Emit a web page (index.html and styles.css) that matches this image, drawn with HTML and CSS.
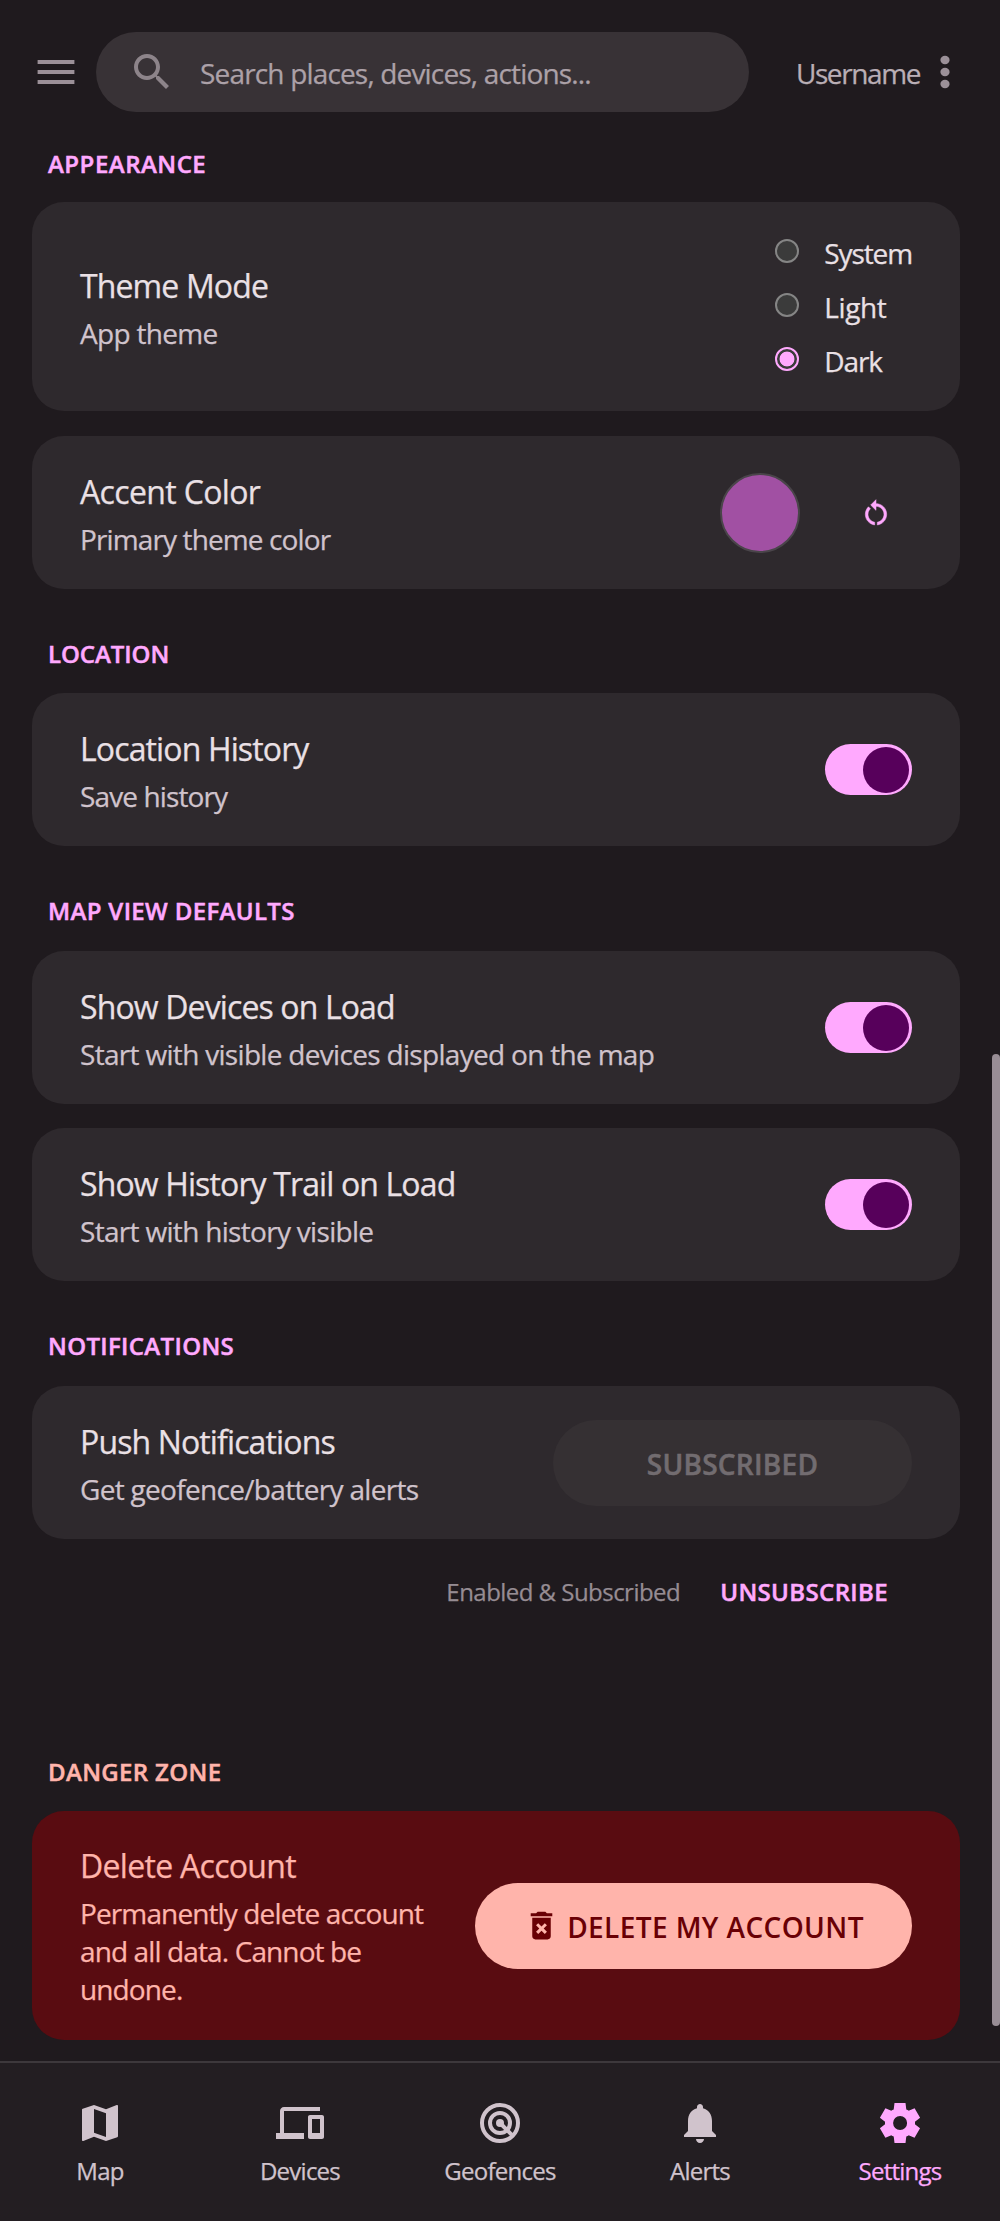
FILE: index.html
```html
<!DOCTYPE html>
<html lang="en">
<head>
<meta charset="utf-8">
<title>Settings</title>
<link rel="stylesheet" href="styles.css">
</head>
<body>
<div class="app">
  <header class="topbar">
    <button class="icon-btn" aria-label="Menu">
      <svg class="icon" viewBox="0 0 24 24"><path d="M2.8 18h18.4v-2H2.8v2zm0-5h18.4v-2H2.8v2zm0-7v2h18.4V6H2.8z"/></svg>
    </button>
    <div class="search">
      <svg class="icon" viewBox="0 0 24 24"><path d="M15.5 14h-.79l-.28-.27C15.41 12.59 16 11.11 16 9.5 16 5.91 13.09 3 9.5 3S3 5.91 3 9.5 5.91 16 9.5 16c1.61 0 3.09-.59 4.23-1.57l.27.28v.79l5 4.99L20.49 19l-4.99-5zm-6 0C7.01 14 5 11.99 5 9.5S7.01 5 9.5 5 14 7.01 14 9.5 11.99 14 9.5 14z"/></svg>
      <span class="search-hint">Search places, devices, actions...</span>
    </div>
    <span class="username">Username</span>
    <button class="icon-btn more" aria-label="More">
      <svg class="icon" viewBox="0 0 24 24"><ellipse cx="12" cy="6" rx="2.3" ry="2.1"/><ellipse cx="12" cy="12" rx="2.3" ry="2.1"/><ellipse cx="12" cy="18" rx="2.3" ry="2.1"/></svg>
    </button>
  </header>

  <main class="content">
    <section class="group">
      <h2 class="label">APPEARANCE</h2>
      <div class="card">
        <div class="text">
          <div class="title">Theme Mode</div>
          <div class="sub short">App theme</div>
        </div>
        <div class="radios">
          <label class="radio"><span class="ring"></span>System</label>
          <label class="radio light"><span class="ring"></span>Light</label>
          <label class="radio"><span class="ring on"></span>Dark</label>
        </div>
      </div>
      <div class="card accent">
        <div class="text">
          <div class="title color">Accent Color</div>
          <div class="sub">Primary theme color</div>
        </div>
        <span class="swatch"></span>
        <button class="reset" aria-label="Reset">
          <svg viewBox="0 0 24 24"><path d="M12 5V2L8 6l4 4V7c3.31 0 6 2.69 6 6 0 2.97-2.17 5.43-5 5.91v2.02c3.95-.49 7-3.85 7-7.93 0-4.42-3.58-8-8-8zM6 13c0-1.65.67-3.15 1.76-4.24L6.34 7.34C4.9 8.79 4 10.79 4 13c0 4.08 3.05 7.44 7 7.93v-2.02c-2.83-.48-5-2.94-5-5.91z"/></svg>
        </button>
      </div>
    </section>

    <section class="group location">
      <h2 class="label narrow">LOCATION</h2>
      <div class="card">
        <div class="text">
          <div class="title">Location History</div>
          <div class="sub">Save history</div>
        </div>
        <span class="toggle"><span class="knob"></span></span>
      </div>
    </section>

    <section class="group">
      <h2 class="label">MAP VIEW DEFAULTS</h2>
      <div class="card">
        <div class="text">
          <div class="title">Show Devices on Load</div>
          <div class="sub long">Start with visible devices displayed on the map</div>
        </div>
        <span class="toggle"><span class="knob"></span></span>
      </div>
      <div class="card">
        <div class="text">
          <div class="title">Show History Trail on Load</div>
          <div class="sub long">Start with history visible</div>
        </div>
        <span class="toggle"><span class="knob"></span></span>
      </div>
    </section>

    <section class="group">
      <h2 class="label">NOTIFICATIONS</h2>
      <div class="card">
        <div class="text">
          <div class="title">Push Notifications</div>
          <div class="sub long">Get geofence/battery alerts</div>
        </div>
        <button class="btn disabled" disabled>SUBSCRIBED</button>
      </div>
      <div class="status">
        <span class="status-text">Enabled &amp; Subscribed</span>
        <a class="link">UNSUBSCRIBE</a>
      </div>
    </section>

    <section class="group danger">
      <h2 class="label">DANGER ZONE</h2>
      <div class="card">
        <div class="text">
          <div class="title">Delete Account</div>
          <div class="sub">Permanently delete account and all data. Cannot be undone.</div>
        </div>
        <button class="btn delete">
          <svg viewBox="0 0 24 24"><path d="M6 19c0 1.1.9 2 2 2h8c1.1 0 2-.9 2-2V7H6v12zm2.46-7.12l1.41-1.41L12 12.59l2.12-2.12 1.41 1.41L13.41 14l2.12 2.12-1.41 1.41L12 15.41l-2.12 2.12-1.41-1.41L10.59 14l-2.13-2.12zM15.5 4l-1-1h-5l-1 1H5v2h14V4z"/></svg>
          <span>DELETE MY ACCOUNT</span>
        </button>
      </div>
    </section>
  </main>

  <nav class="tabs">
    <a class="tab">
      <svg class="icon" viewBox="0 0 24 24"><path d="M20.5 3l-.16.03L15 5.1 9 3 3.36 4.9c-.21.07-.36.25-.36.48V20.5c0 .28.22.5.5.5l.16-.03L9 18.9l6 2.1 5.64-1.9c.21-.07.36-.25.36-.48V3.5c0-.28-.22-.5-.5-.5zM15 19l-6-2.11V5l6 2.11V19z"/></svg>
      <span>Map</span>
    </a>
    <a class="tab">
      <svg class="icon" viewBox="0 0 24 24"><path d="M4 6h18V4H4c-1.1 0-2 .9-2 2v11H0v3h14v-3H4V6zm19 2h-6c-.55 0-1 .45-1 1v10c0 .55.45 1 1 1h6c.55 0 1-.45 1-1V9c0-.55-.45-1-1-1zm-1 9h-4v-7h4v7z"/></svg>
      <span>Devices</span>
    </a>
    <a class="tab">
      <svg class="icon target" viewBox="0 0 24 24"><circle cx="12" cy="12" r="9"/><circle cx="12" cy="12" r="5"/><circle class="dot" cx="12" cy="12" r="2"/><path d="M12 12l5.9 5.9"/></svg>
      <span>Geofences</span>
    </a>
    <a class="tab">
      <svg class="icon" viewBox="0 0 24 24"><path d="M12 22c1.1 0 2-.9 2-2h-4c0 1.1.89 2 2 2zm6-6v-5c0-3.07-1.64-5.64-4.5-6.32V4c0-.83-.67-1.5-1.5-1.5s-1.5.67-1.5 1.5v.68C7.63 5.36 6 7.92 6 11v5l-2 2v1h16v-1l-2-2z"/></svg>
      <span>Alerts</span>
    </a>
    <a class="tab active">
      <svg class="icon" viewBox="0 -960 960 960"><path d="m370-80-16-128q-13-5-24.5-12T307-235l-119 50L78-375l103-78q-1-7-1-13.5v-27q0-6.5 1-13.5L78-585l110-190 119 50q11-8 23-15t24-12l16-128h220l16 128q13 5 24.5 12t22.5 15l119-50 110 190-103 78q1 7 1 13.5v27q0 6.5-2 13.5l103 78-110 190-118-50q-11 8-23 15t-24 12L590-80H370Zm112-260q58 0 99-41t41-99q0-58-41-99t-99-41q-59 0-99.5 41T342-480q0 58 40.5 99t99.5 41Z"/></svg>
      <span>Settings</span>
    </a>
  </nav>
  <div class="scrollbar"></div>
</div>
</body>
</html>
```
FILE: styles.css
```css
:root {
  --bg: #1f1a1e;
  --card: #2e292d;
  --pill: #383236;
  --primary: #ffa9fe;
  --on-primary: #57005b;
  --text: #eae0e5;
  --muted: #d0c3cc;
  --error: #ffb4ab;
}

* { box-sizing: border-box; }

body {
  margin: 0;
  background: var(--bg);
  color: var(--text);
  font-family: "Open Sans", "Noto Sans", sans-serif;
  -webkit-text-stroke: .25px currentColor;
}

button {
  border: 0;
  padding: 0;
  background: none;
  font: inherit;
}

.app {
  position: relative;
  display: flex;
  flex-direction: column;
  width: 1000px;
  height: 2221px;
  overflow: hidden;
}

.icon {
  display: block;
  flex: none;
  width: 48px;
  height: 48px;
  fill: currentColor;
}

/* Top bar */
.topbar {
  display: flex;
  align-items: center;
  height: 144px;
  padding: 0 31px 0 32px;
  font-size: 28px;
  line-height: 38px;
}

.icon-btn { color: #9b9098; }

.search {
  display: flex;
  align-items: center;
  width: 653px;
  height: 80px;
  margin-left: 16px;
  padding-left: 32px;
  border-radius: 40px;
  background: var(--pill);
  color: #8d848a;
}

.search-hint {
  padding: 2px 0 0 24px;
  color: #aca1a8;
  letter-spacing: -.83px;
}

.username {
  margin: 0 1px 0 auto;
  padding-top: 2px;
  color: #b9aeb5;
  letter-spacing: -1.4px;
}

/* Settings groups */
.content {
  flex: 1;
  padding: 0 40px 0 32px;
}

.label {
  margin: 0;
  padding: 48px 16px 24px;
  font-size: 24px;
  line-height: 33px;
  font-weight: 600;
  letter-spacing: .35px;
  color: var(--primary);
  -webkit-text-stroke-width: .5px;
}

.label.narrow { letter-spacing: -.05px; }

.group:first-child .label {
  padding: 3px 16px 22px;
  letter-spacing: .5px;
}

.location .label,
.danger .label { padding: 48px 16px 23px; }

.danger .label { padding-top: 49px; }

.card {
  display: flex;
  align-items: center;
  justify-content: space-between;
  height: 153px;
  padding: 0 48px;
  border-radius: 32px;
  background: var(--card);
}

.group:first-child .card { height: 209px; }

.card + .card { margin-top: 24px; }

.group:first-child .card.accent {
  height: 153px;
  margin-top: 25px;
}

.text {
  flex: 1;
  padding-top: 3px;
}

.title {
  font-size: 32px;
  line-height: 44px;
  letter-spacing: -.87px;
}

.title.color { letter-spacing: -.65px; }

.sub {
  margin-top: 6.5px;
  font-size: 28px;
  line-height: 38px;
  letter-spacing: -.88px;
  color: var(--muted);
}

.sub.short { letter-spacing: -.7px; }

.sub.long { letter-spacing: -.69px; }

.radios {
  display: grid;
  gap: 16px;
}

.radio {
  display: flex;
  gap: 25px;
  font-size: 28px;
  line-height: 38px;
  letter-spacing: -1.1px;
}

.radio.light { letter-spacing: -.4px; }

.ring {
  width: 24px;
  height: 24px;
  margin-top: 5px;
  border: 2px solid #858585;
  border-radius: 50%;
  background: #3b3b3b;
}

.ring.on {
  border-color: var(--primary);
  background: radial-gradient(circle, var(--primary) 7px, #3b3b3b 7.8px);
}

.swatch {
  width: 80px;
  height: 80px;
  border: 2px solid #4a454a;
  border-radius: 50%;
  background: #a150a3;
}

.reset {
  display: grid;
  place-items: center;
  width: 72px;
  height: 72px;
  margin-left: 40px;
}

.reset svg {
  width: 32px;
  height: 32px;
  fill: var(--primary);
  stroke: var(--primary);
  stroke-width: .4;
}

.toggle {
  display: flex;
  align-items: center;
  justify-content: flex-end;
  width: 87.5px;
  height: 51.5px;
  padding-right: 2.75px;
  border-radius: 26px;
  background: var(--primary);
}

.knob {
  width: 46px;
  height: 46px;
  border-radius: 50%;
  background: var(--on-primary);
}

.btn {
  display: flex;
  align-items: center;
  justify-content: center;
  height: 86px;
  padding-top: 3px;
  border-radius: 43px;
  font-size: 28px;
  line-height: 38px;
  font-weight: 600;
  letter-spacing: .4px;
}

.btn.disabled {
  width: 359px;
  background: #353033;
  color: #726c70;
  letter-spacing: .25px;
  -webkit-text-stroke-width: .5px;
}

.status {
  display: flex;
  align-items: center;
  justify-content: flex-end;
  gap: 40px;
  height: 167px;
  padding: 0 72px 62px 0;
  font-size: 24px;
  line-height: 33px;
}

.status-text {
  color: #968c93;
  letter-spacing: -.53px;
}

.link {
  font-weight: 600;
  letter-spacing: .37px;
  color: var(--primary);
  -webkit-text-stroke-width: .5px;
}

/* Danger zone */
.danger .label,
.danger .title,
.danger .sub { color: var(--error); }

.danger .title { letter-spacing: -.7px; }

.danger .card {
  height: 229px;
  background: #590c11;
}

.danger .text {
  flex: none;
  width: 360px;
  padding-top: 1px;
}

.btn.delete {
  width: 437px;
  gap: 7px;
  background: var(--error);
  color: #690005;
  -webkit-text-stroke-width: 0;
}

.btn.delete svg {
  width: 37px;
  height: 37px;
  margin-top: -4px;
  fill: currentColor;
}

/* Bottom tabs */
.tabs {
  display: grid;
  grid-template-columns: repeat(5, 1fr);
  height: 160px;
  border-top: 2px solid #3d383c;
  background: #231e22;
  color: var(--muted);
}

.tab {
  display: flex;
  flex-direction: column;
  align-items: center;
  padding-top: 36px;
  font-size: 24px;
  line-height: 33px;
  letter-spacing: -.75px;
}

.tab span { margin-top: 7px; }

.tab.active { color: var(--primary); }

.target {
  fill: none;
  stroke: currentColor;
  stroke-width: 2;
}

.target .dot {
  fill: currentColor;
  stroke: none;
}

/* Scroll thumb floats over the content edge */
.scrollbar {
  position: absolute;
  top: 1054px;
  right: 0;
  width: 8px;
  height: 972px;
  border-radius: 4px;
  background: #988d95;
}
```
